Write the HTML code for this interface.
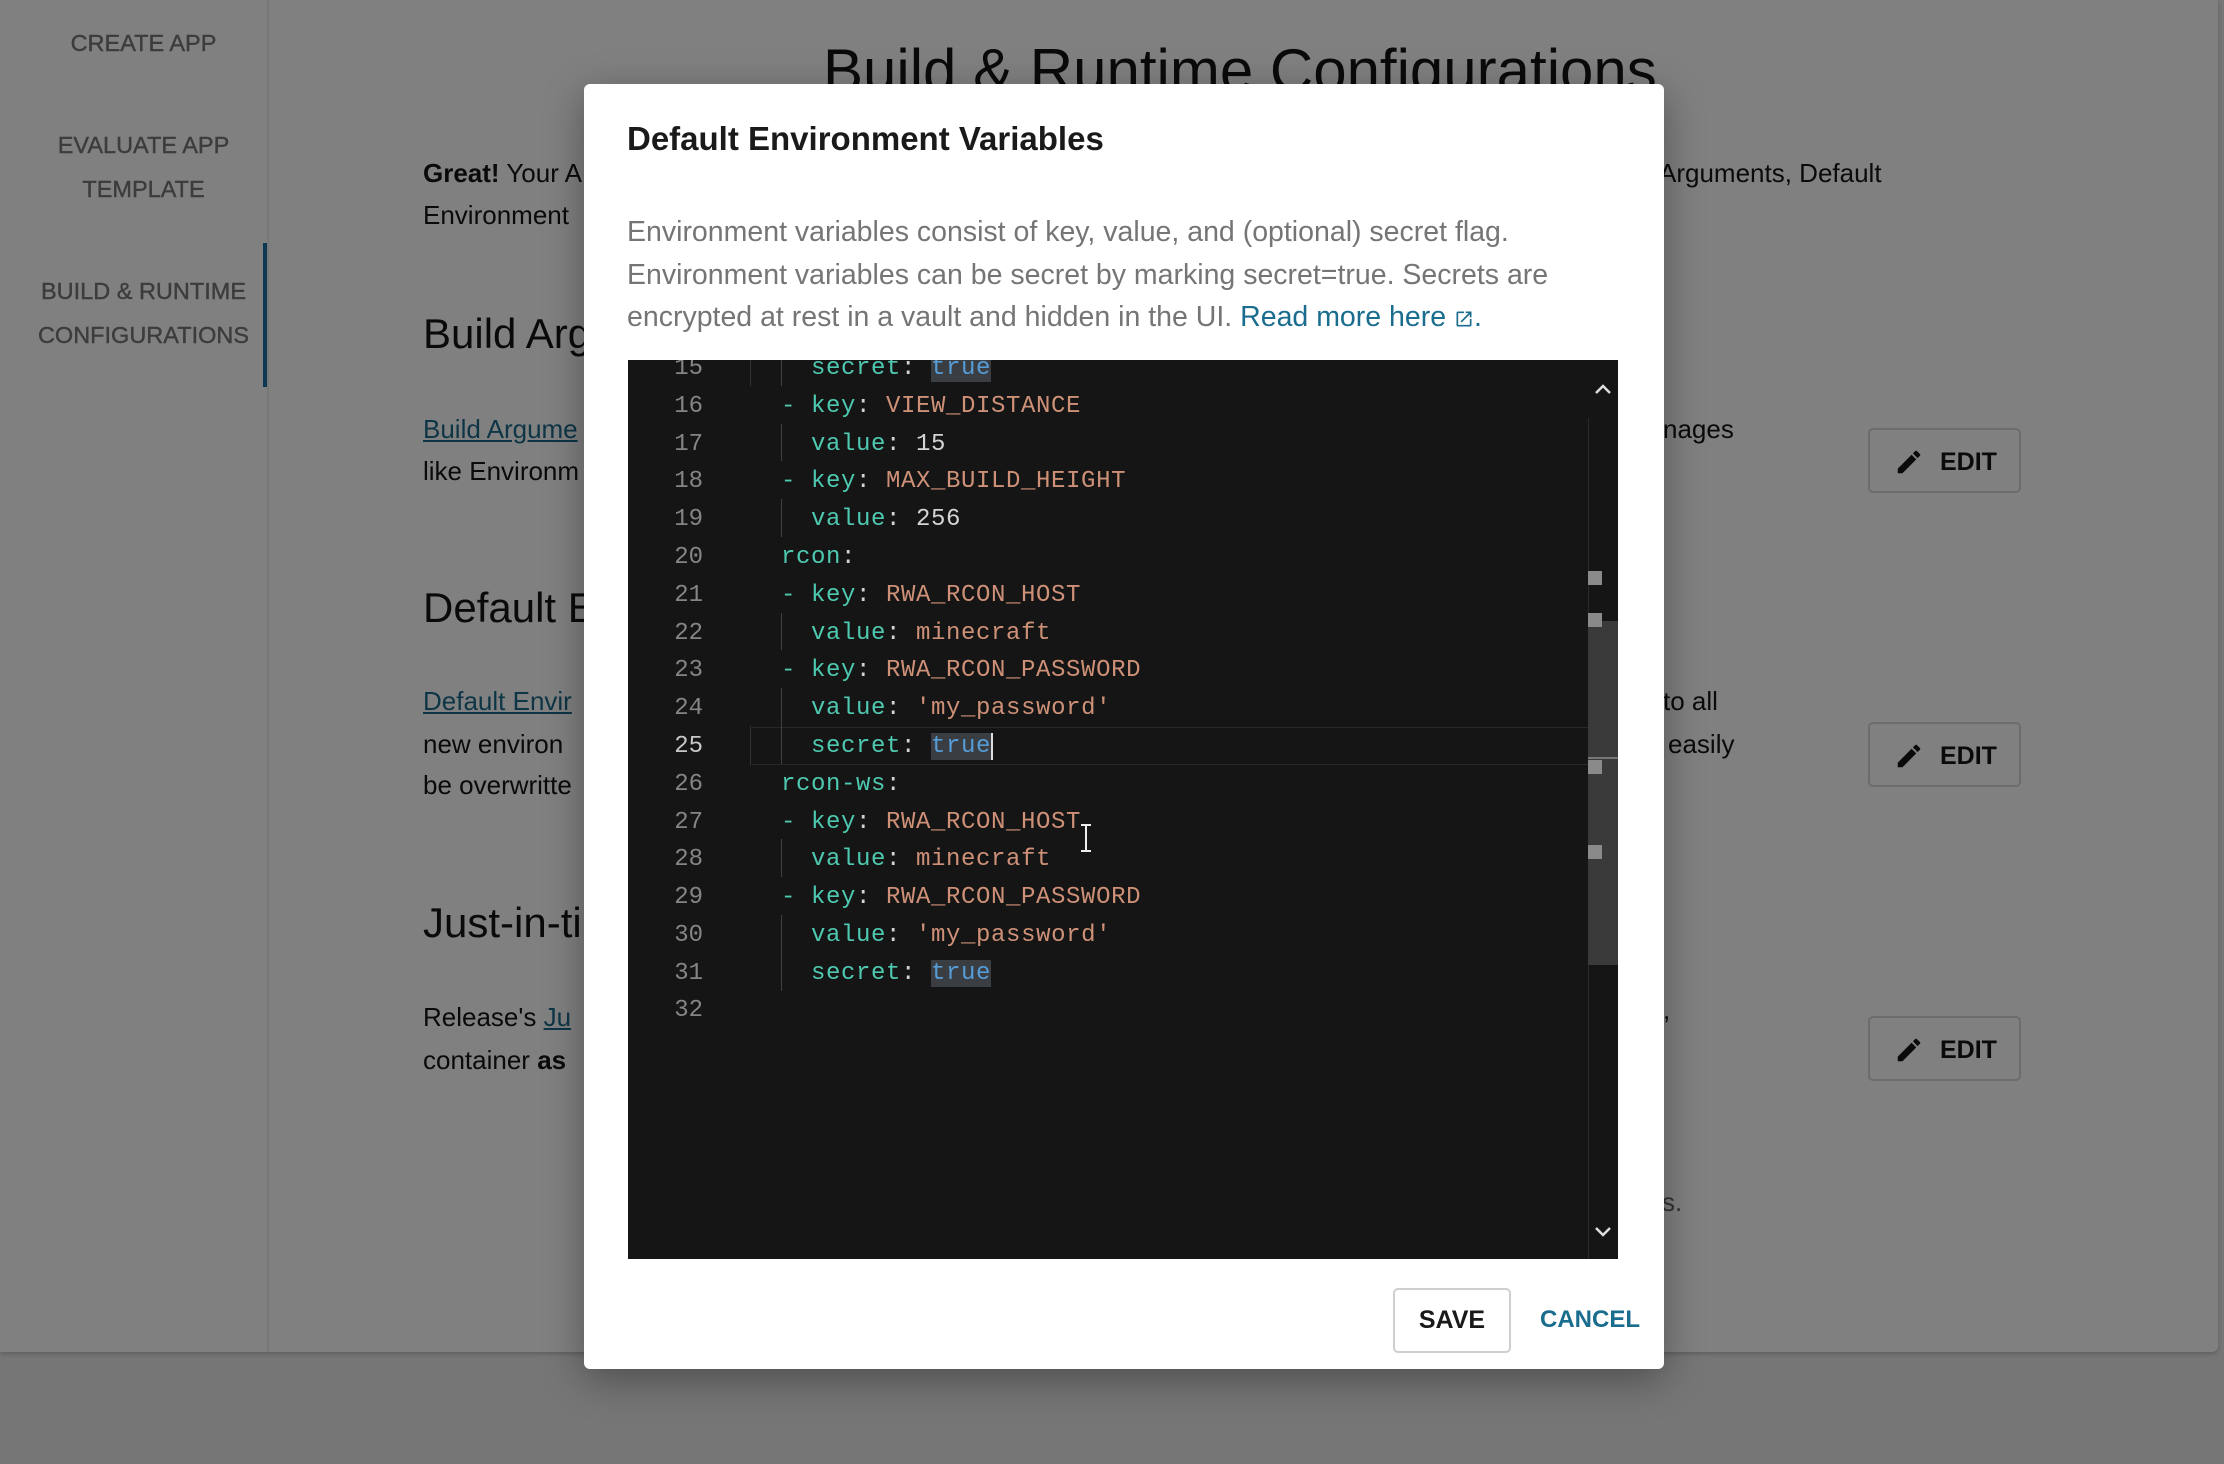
<!DOCTYPE html>
<html><head><meta charset="utf-8"><style>
*{margin:0;padding:0;box-sizing:border-box}
body{width:2224px;height:1464px;background:#767676;position:relative;overflow:hidden;font-family:"Liberation Sans",sans-serif}
.abs{position:absolute;white-space:nowrap}
.card{position:absolute;left:0;top:0;width:2218px;height:1352px;background:#808080;border-radius:0 0 6px 0;box-shadow:0 2px 4px rgba(0,0,0,.2)}
.side{position:absolute;left:0;top:0;width:269px;height:1352px;border-right:2px solid #787878}
.nav{position:absolute;left:9px;width:269px;text-align:center;color:#3c3c3c;font-size:23.5px;line-height:44px;-webkit-text-stroke:0.4px #3c3c3c}
.t{color:#0a0a0a;font-size:26px}
.h{color:#0a0a0a;font-size:42px}
.lnk{color:#0d3546;text-decoration:underline}
.edit{position:absolute;left:1868px;width:153px;height:65px;border:2px solid #6c6c6c;border-radius:5px;font-size:25px;font-weight:bold;color:#0a0a0a}
.edit svg{position:absolute;left:24px;top:17px}
.edit span{position:absolute;left:70px;top:18px}
.modal{position:absolute;left:584px;top:84px;width:1080px;height:1285px;background:#fff;border-radius:6px;box-shadow:0 10px 40px rgba(0,0,0,.35)}
.ed{position:absolute;left:628px;top:360px;width:990px;height:899px;background:#151515;overflow:hidden;font-family:"Liberation Mono",monospace;font-size:24px}
.ln{position:absolute;left:0;width:75px;text-align:right;color:#858585;height:38px;line-height:38px}
.cd{position:absolute;left:153px;height:38px;line-height:38px;color:#d4d4d4;white-space:pre;letter-spacing:0.6px}
.k{color:#4ec9b0}.s{color:#ce9178}.b{color:#569cd6;background:#3a3d41}
</style></head><body>
<div class="card">
 <div class="side">
  <div class="nav" style="top:21px">CREATE APP</div>
  <div class="nav" style="top:123px">EVALUATE APP<br>TEMPLATE</div>
  <div class="nav" style="top:269px">BUILD &amp; RUNTIME<br>CONFIGURATIONS</div>
  <div style="position:absolute;left:263px;top:243px;width:4px;height:144px;background:#0d3a52"></div>
 </div>
 <div class="abs h" style="left:823px;top:36px;font-size:60px">Build &amp; Runtime Configurations</div>
 <div class="abs t" style="left:423px;top:158px"><b>Great!</b> Your A</div>
 <div class="abs t" style="left:423px;top:200px">Environment</div>
 <div class="abs t" style="left:1659px;top:158px">Arguments, Default</div>
 <div class="abs h" style="left:423px;top:310px">Build Arg</div>
 <div class="abs t" style="left:423px;top:414px"><span class="lnk">Build Argume</span></div>
 <div class="abs t" style="left:423px;top:456px">like Environm</div>
 <div class="abs t" style="left:1663px;top:414px">nages</div>
 <div class="abs h" style="left:423px;top:584px">Default E</div>
 <div class="abs t" style="left:423px;top:686px"><span class="lnk">Default Envir</span></div>
 <div class="abs t" style="left:423px;top:729px">new environ</div>
 <div class="abs t" style="left:423px;top:770px">be overwritte</div>
 <div class="abs t" style="left:1663px;top:686px">to all</div>
 <div class="abs t" style="left:1668px;top:729px">easily</div>
 <div class="abs h" style="left:423px;top:899px">Just-in-ti</div>
 <div class="abs t" style="left:423px;top:1002px">Release's <span class="lnk">Ju</span></div>
 <div class="abs t" style="left:423px;top:1045px">container <b>as</b></div>
 <div class="abs t" style="left:1663px;top:995px">,</div>
 <div class="abs t" style="left:1662px;top:1187px;color:#333">s.</div>
 <div class="edit" style="top:428px"><svg width="30" height="30" viewBox="0 0 24 24"><path fill="#0a0a0a" d="M3 17.25V21h3.75L17.81 9.94l-3.75-3.75L3 17.25zM20.71 7.04a1 1 0 000-1.41l-2.34-2.34a1 1 0 00-1.41 0l-1.830 1.83 3.75 3.75 1.83-1.83z"/></svg><span>EDIT</span></div>
 <div class="edit" style="top:722px"><svg width="30" height="30" viewBox="0 0 24 24"><path fill="#0a0a0a" d="M3 17.25V21h3.75L17.81 9.94l-3.75-3.75L3 17.25zM20.71 7.04a1 1 0 000-1.41l-2.34-2.34a1 1 0 00-1.41 0l-1.83 1.83 3.75 3.75 1.83-1.83z"/></svg><span>EDIT</span></div>
 <div class="edit" style="top:1016px"><svg width="30" height="30" viewBox="0 0 24 24"><path fill="#0a0a0a" d="M3 17.25V21h3.75L17.81 9.94l-3.75-3.75L3 17.25zM20.71 7.04a1 1 0 000-1.41l-2.34-2.34a1 1 0 00-1.41 0l-1.83 1.83 3.75 3.75 1.83-1.83z"/></svg><span>EDIT</span></div>
</div>

<div class="modal"></div>
<div class="abs" style="left:627px;top:120px;font-size:33px;font-weight:bold;color:#1a1a1a;-webkit-text-stroke:0">Default Environment Variables</div>
<div class="abs" style="left:627px;top:211px;font-size:28.5px;line-height:42.5px;color:#757575">Environment variables consist of key, value, and (optional) secret flag.<br>Environment variables can be secret by marking secret=true. Secrets are<br>encrypted at rest in a vault and hidden in the UI. <span style="color:#1a6d8e">Read more here <svg width="20" height="20" viewBox="0 0 24 24" style="vertical-align:-3px"><path fill="#1a6d8e" d="M19 19H5V5h7V3H5a2 2 0 00-2 2v14a2 2 0 002 2h14a2 2 0 002-2v-7h-2v7zM14 3v2h3.59l-9.83 9.830 1.41 1.41L19 6.41V10h2V3h-7z"/></svg>.</span></div>

<div class="ed">
 <div style="position:absolute;left:122px;top:0;width:1px;height:26px;background:#333"></div>
 <div style="position:absolute;left:122px;top:366px;width:1px;height:40px;background:#333"></div>
 <div style="position:absolute;left:124px;top:367px;width:836px;height:38px;border-top:1px solid #282828;border-bottom:1px solid #282828"></div>
 <div style="position:absolute;left:153px;top:0;width:1px;height:26px;background:#404040"></div>
 <div style="position:absolute;left:153px;top:64px;width:1px;height:37px;background:#404040"></div>
 <div style="position:absolute;left:153px;top:139px;width:1px;height:38px;background:#404040"></div>
 <div style="position:absolute;left:153px;top:253px;width:1px;height:37px;background:#404040"></div>
 <div style="position:absolute;left:153px;top:328px;width:1px;height:76px;background:#404040"></div>
 <div style="position:absolute;left:153px;top:479px;width:1px;height:38px;background:#404040"></div>
 <div style="position:absolute;left:153px;top:555px;width:1px;height:76px;background:#404040"></div>
 <div style="position:absolute;left:960px;top:58px;width:30px;height:841px;border-left:1px solid #2a2a2a"></div>
 <div style="position:absolute;left:960px;top:261px;width:30px;height:344px;background:#3a3a3a"></div>
 <div style="position:absolute;left:960px;top:211px;width:14px;height:14px;background:#8a8a8a"></div>
 <div style="position:absolute;left:960px;top:253px;width:14px;height:14px;background:#8a8a8a"></div>
 <div style="position:absolute;left:960px;top:400px;width:14px;height:14px;background:#8a8a8a"></div>
 <div style="position:absolute;left:960px;top:485px;width:14px;height:14px;background:#8a8a8a"></div>
 <div style="position:absolute;left:960px;top:397px;width:30px;height:2px;background:#777"></div>
 <svg style="position:absolute;left:965px;top:21px" width="20" height="16" viewBox="0 0 20 16"><path d="M3 12L10 5l7 7" stroke="#ddd" stroke-width="2.5" fill="none"/></svg>
 <svg style="position:absolute;left:965px;top:864px" width="20" height="16" viewBox="0 0 20 16"><path d="M3 4l7 7 7-7" stroke="#ddd" stroke-width="2.5" fill="none"/></svg>

 <div class="ln" style="top:-10px">15</div><div class="cd" style="top:-10px">  <span class="k">secret</span>: <span class="b">true</span></div>
 <div class="ln" style="top:28px">16</div><div class="cd" style="top:28px"><span class="k">- key</span>: <span class="s">VIEW_DISTANCE</span></div>
 <div class="ln" style="top:66px">17</div><div class="cd" style="top:66px">  <span class="k">value</span>: 15</div>
 <div class="ln" style="top:103px">18</div><div class="cd" style="top:103px"><span class="k">- key</span>: <span class="s">MAX_BUILD_HEIGHT</span></div>
 <div class="ln" style="top:141px">19</div><div class="cd" style="top:141px">  <span class="k">value</span>: 256</div>
 <div class="ln" style="top:179px">20</div><div class="cd" style="top:179px"><span class="k">rcon</span>:</div>
 <div class="ln" style="top:217px">21</div><div class="cd" style="top:217px"><span class="k">- key</span>: <span class="s">RWA_RCON_HOST</span></div>
 <div class="ln" style="top:255px">22</div><div class="cd" style="top:255px">  <span class="k">value</span>: <span class="s">minecraft</span></div>
 <div class="ln" style="top:292px">23</div><div class="cd" style="top:292px"><span class="k">- key</span>: <span class="s">RWA_RCON_PASSWORD</span></div>
 <div class="ln" style="top:330px">24</div><div class="cd" style="top:330px">  <span class="k">value</span>: <span class="s">'my_password'</span></div>
 <div class="ln" style="top:368px;color:#c6c6c6">25</div><div class="cd" style="top:368px">  <span class="k">secret</span>: <span class="b">true</span><span style="border-left:2px solid #ddd"></span></div>
 <div class="ln" style="top:406px">26</div><div class="cd" style="top:406px"><span class="k">rcon-ws</span>:</div>
 <div class="ln" style="top:444px">27</div><div class="cd" style="top:444px"><span class="k">- key</span>: <span class="s">RWA_RCON_HOST</span></div>
 <div class="ln" style="top:481px">28</div><div class="cd" style="top:481px">  <span class="k">value</span>: <span class="s">minecraft</span></div>
 <div class="ln" style="top:519px">29</div><div class="cd" style="top:519px"><span class="k">- key</span>: <span class="s">RWA_RCON_PASSWORD</span></div>
 <div class="ln" style="top:557px">30</div><div class="cd" style="top:557px">  <span class="k">value</span>: <span class="s">'my_password'</span></div>
 <div class="ln" style="top:595px">31</div><div class="cd" style="top:595px">  <span class="k">secret</span>: <span class="b">true</span></div>
 <div class="ln" style="top:632px">32</div>
 <svg style="position:absolute;left:451px;top:463px" width="14" height="30" viewBox="0 0 14 30"><path d="M2 2h10M7 2v26M2 28h10" stroke="#eee" stroke-width="2" fill="none"/></svg>
</div>

<div class="abs" style="left:1393px;top:1288px;width:118px;height:65px;border:2px solid #cfcfcf;border-radius:5px;text-align:center;line-height:61px;font-size:25px;font-weight:bold;color:#1a1a1a">SAVE</div>
<div class="abs" style="left:1540px;top:1306px;font-size:24px;font-weight:bold;color:#1a6d8e">CANCEL</div>
</body></html>
